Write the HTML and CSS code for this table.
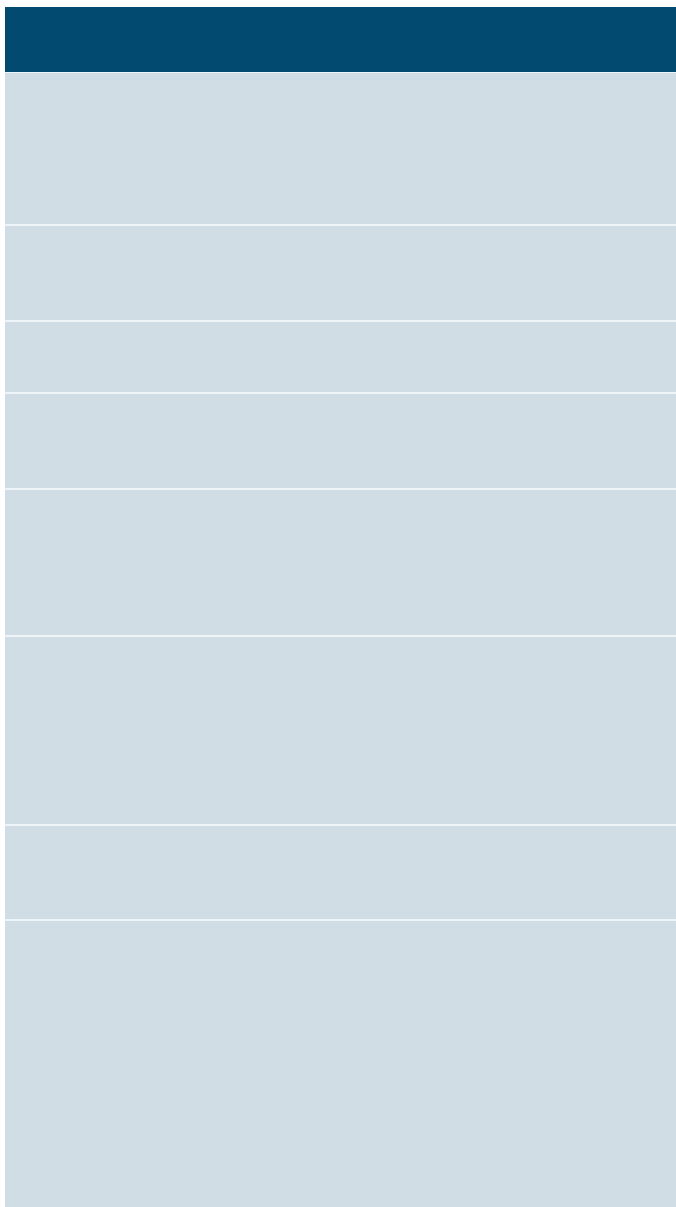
FILE: index.html
```html
<!DOCTYPE html>
<html lang="en">
<head>
  <meta charset="UTF-8">
  <meta name="viewport" content="width=device-width, initial-scale=1.0">
  <title>Table</title>
  <link rel="stylesheet" href="styles.css">
</head>
<body>
  <div class="table">
    <div class="table-head"></div>
    <div class="row row-1"></div>
    <div class="row row-2"></div>
    <div class="row row-3"></div>
    <div class="row row-4"></div>
    <div class="row row-5"></div>
    <div class="row row-6"></div>
    <div class="row row-7"></div>
    <div class="row row-8"></div>
  </div>
</body>
</html>
```

FILE: styles.css
```css
body {
  margin: 0;
  font-family: Arial, "Liberation Sans", sans-serif;
  background-color: #fff;
  overflow: hidden; }

.table {
  display: flex;
  flex-direction: column;
  gap: 2px;
  margin: 7px 0 0 5px;
  width: 671px;
  background-color: #eef5f8; }

.table-head {
  height: 65px;
  background-color: #024a70; }

.row { background-color: #d1dde4; }

.table-head + .row { margin-top: -1px; }

.row-1 { height: 151px; }
.row-2 { height: 94px; }
.row-3 { height: 70px; }
.row-4 { height: 94px; }
.row-5 { height: 145px; }
.row-6 { height: 187px; }
.row-7 { height: 93px; }
.row-8 { height: 288px; }
```
